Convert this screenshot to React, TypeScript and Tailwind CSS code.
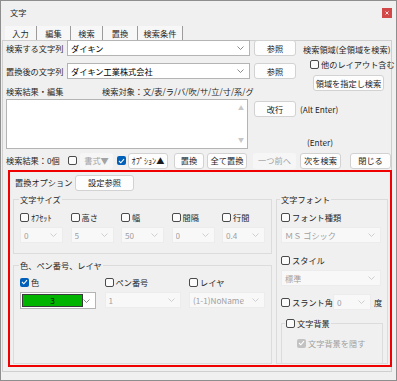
import React from 'react';

// 文字 dialog - 置換 tab with options panel open

const Chevron = ({ dim }: { dim?: boolean }) => (
    <svg width="7" height="4" viewBox="0 0 7 4" className="shrink-0">
        <polyline points="0.5,0.5 3.5,3.5 6.5,0.5" fill="none" stroke={dim ? '#c4c4c4' : '#707070'} strokeWidth="0.8" />
    </svg>
);

const Chk = ({ on, dim }: { on?: boolean; dim?: boolean }) =>
    on ? (
        <div className={`w-[9px] h-[9px] rounded-[2px] shrink-0 flex items-center justify-center ${dim ? 'bg-[#c2c2c2]' : 'bg-[#005fb8]'}`}>
            <svg width="7" height="6" viewBox="0 0 7 6">
                <polyline points="1,3 2.8,4.8 6,1.2" fill="none" stroke="#ffffff" strokeWidth="1.1" />
            </svg>
        </div>
    ) : (
        <div className="w-[9px] h-[9px] rounded-[2px] shrink-0 border border-[#4a4a4a] bg-[#fbfbfb]" />
    );

const Btn = ({ children, className = '', dim }: { children: React.ReactNode; className?: string; dim?: boolean }) => (
    <div
        className={`h-[16px] rounded-[3px] border flex items-center justify-center shrink-0 ${dim ? 'border-[#e4e4e4] bg-[#f6f6f6] text-[#a3a3a3]' : 'border-[#d2d2d2] bg-[#fdfdfd] text-[#1b1b1b]'} ${className}`}
    >
        {children}
    </div>
);

const Sel = ({ value, className = '', dim }: { value: string; className?: string; dim?: boolean }) => (
    <div
        className={`h-[16px] flex items-center justify-between pl-[3px] pr-[5px] shrink-0 border ${dim ? 'border-[#ececec] bg-[#f8f8f8] text-[#a0a0a0]' : 'border-[#b4b4b4] bg-white text-black'} ${className}`}
    >
        <span className="truncate">{value}</span>
        <Chevron dim={dim} />
    </div>
);

const ChkLabel = ({ label, on, dim }: { label: string; on?: boolean; dim?: boolean }) => (
    <div className={`h-[10px] flex items-center gap-[2px] ${dim ? 'text-[#a0a0a0]' : ''}`}>
        <Chk on={on} dim={dim} />
        <span>{label}</span>
    </div>
);

const tabs = [
    { name: '入力', w: 'w-[32px]' },
    { name: '編集', w: 'w-[34px]' },
    { name: '検索', w: 'w-[32px]' },
    { name: '置換', w: 'w-[35px]' },
    { name: '検索条件', w: 'w-[45px]' },
];

export default function App() {
    return (
        <div className="w-[397px] h-[381px] bg-[#f0f0f0] border border-[#8e8e8e] flex flex-col whitespace-nowrap font-['Noto_Sans_CJK_JP','Noto_Sans',sans-serif] text-[8.2px] leading-[11px] text-[#262626]">
            {/* Title bar */}
            <div className="h-[23px] flex items-center pl-[9px] pr-[4px] shrink-0">
                <span>文字</span>
                <div className="ml-auto w-[10px] h-[10px] bg-[#d24848] flex items-center justify-center">
                    <svg width="4" height="4" viewBox="0 0 4 4">
                        <path d="M0.5 0.5 L3.5 3.5 M3.5 0.5 L0.5 3.5" stroke="#fff" strokeWidth="0.8" />
                    </svg>
                </div>
            </div>

            {/* Tabs */}
            <div className="h-[16px] flex items-end pl-[4px] shrink-0">
                {tabs.map((t) => (
                    <div key={t.name} className={`${t.w} h-[14px] flex items-center justify-center border-r border-[#9c9c9c] bg-[#f7f7f7]`}>
                        {t.name}
                    </div>
                ))}
            </div>

            {/* Tab panel */}
            <div className="ml-[1px] w-[390px] h-[332px] border border-[#cfcfcf] pl-[3px] flex flex-col shrink-0">
                <div className="flex">
                    <div className="w-[291px] shrink-0 flex flex-col">
                        <div className="h-[16px] flex items-center -mt-[1px]">
                            <span className="w-[61px]">検索する文字列</span>
                            <Sel value="ダイキン" className="w-[183px]" />
                            <Btn className="ml-[4px] w-[42px]">参照</Btn>
                        </div>
                        <div className="h-[16px] flex items-center mt-[7px]">
                            <span className="w-[61px]">置換後の文字列</span>
                            <Sel value="ダイキン工業株式会社" className="w-[183px]" />
                            <Btn className="ml-[4px] w-[42px]">参照</Btn>
                        </div>
                        <div className="h-[11px] flex items-center mt-[7px]">
                            <span className="w-[96px]">検索結果・編集</span>
                            <span>検索対象：文/表/ラ/バ/吹/サ/立/寸/系/グ</span>
                        </div>
                    </div>
                    <div className="ml-[6px] flex flex-col pt-[3px]">
                        <span className="h-[11px]">検索領域(全領域を検索)</span>
                        <div className="ml-[7px] mt-[4px]">
                            <ChkLabel label="他のレイアウト含む" />
                        </div>
                        <Btn className="ml-[10px] mt-[6px] w-[71px] h-[16px]">領域を指定し検索</Btn>
                    </div>
                </div>

                <div className="flex mt-[2px]">
                    <div className="w-[242px] h-[50px] border border-[#b4b4b4] bg-white flex justify-end">
                        <div className="w-[12px] flex flex-col items-center justify-between py-[5px] text-[#c8c8c8] text-[6px] leading-[6px]">
                            <span>▲</span>
                            <span>▼</span>
                        </div>
                    </div>
                    <div className="flex flex-col ml-[6px]">
                        <div className="flex items-center mt-[2px]">
                            <Btn className="w-[42px]">改行</Btn>
                            <span className="ml-[4px]">(Alt Enter)</span>
                        </div>
                        <span className="ml-[53px] mt-[20px]">(Enter)</span>
                    </div>
                </div>

                <div className="h-[17px] flex items-center mt-[3px]">
                    <span className="w-[62px]">検索結果：0個</span>
                    <Chk />
                    <Btn dim className="ml-[3px] w-[33px] border-transparent bg-[#f6f6f6]">書式▼</Btn>
                    <div className="ml-[4px]"><Chk on /></div>
                    <Btn className="ml-[2px] w-[40px]">ｵﾌﾟｼｮﾝ▲</Btn>
                    <Btn className="ml-[6px] w-[30px]">置換</Btn>
                    <Btn className="ml-[3px] w-[40px]">全て置換</Btn>
                    <Btn dim className="ml-[6px] w-[43px] border-transparent">一つ前へ</Btn>
                    <Btn className="ml-[4px] w-[41px]">次を検索</Btn>
                    <Btn className="ml-[9px] w-[41px]">閉じる</Btn>
                </div>

                {/* Options panel */}
                <div className="ml-[2px] mt-[1px] w-[384px] h-[197px] border-2 border-[#f00000] flex flex-col">
                    <div className="h-[17px] flex items-center mt-[2px]">
                        <span className="pl-[5px] w-[65px]">置換オプション</span>
                        <Btn className="w-[59px]">設定参照</Btn>
                    </div>
                    <div className="flex gap-[6px] pl-[3px] mt-[3px]">
                        <div className="w-[257px] flex flex-col">
                            <fieldset className="h-[60px] border border-[#dcdcdc] px-[6px]">
                                <legend className="px-[1px] -ml-[1px]">文字サイズ</legend>
                                <div className="flex gap-[7.5px] mt-[7px]">
                                    {[
                                        ['ｵﾌｾｯﾄ', '0'],
                                        ['高さ', '5'],
                                        ['幅', '50'],
                                        ['間隔', '0'],
                                        ['行間', '0.4'],
                                    ].map(([l, v]) => (
                                        <div key={l} className="w-[43px] flex flex-col">
                                            <ChkLabel label={l} />
                                            <Sel dim value={v} className="mt-[5px] w-[43px]" />
                                        </div>
                                    ))}
                                </div>
                            </fieldset>
                            <fieldset className="h-[104px] mt-[6px] border border-[#dcdcdc] px-[6px]">
                                <legend className="px-[1px] -ml-[1px]">色、ペン番号、レイヤ</legend>
                                <div className="flex gap-[8.5px] mt-[6px]">
                                    <div className="w-[76px] flex flex-col">
                                        <ChkLabel label="色" on />
                                        <div className="mt-[5px] w-[76px] h-[17px] border border-[#b4b4b4] bg-white flex items-center pl-[1px] pr-[5px] justify-between">
                                            <div className="w-[62px] h-[13px] bg-[#00b400] border border-[#3a3a3a] flex items-center justify-center text-black">3</div>
                                            <Chevron />
                                        </div>
                                    </div>
                                    <div className="w-[76px] flex flex-col">
                                        <ChkLabel label="ペン番号" />
                                        <Sel dim value="1" className="mt-[5px] w-[76px]" />
                                    </div>
                                    <div className="w-[76px] flex flex-col">
                                        <ChkLabel label="レイヤ" />
                                        <Sel dim value="(1-1)NoName" className="mt-[5px] w-[76px]" />
                                    </div>
                                </div>
                            </fieldset>
                        </div>
                        <fieldset className="w-[110px] h-[170px] border border-[#dcdcdc] px-[4px]">
                            <legend className="px-[1px] -ml-[1px]">文字フォント</legend>
                            <div className="mt-[7px]"><ChkLabel label="フォント種類" /></div>
                            <Sel dim value="ＭＳ ゴシック" className="mt-[5px] w-[100px]" />
                            <div className="mt-[12px]"><ChkLabel label="スタイル" /></div>
                            <Sel dim value="標準" className="mt-[5px] w-[100px]" />
                            <div className="mt-[8px] h-[16px] flex items-center">
                                <div className="w-[52px]"><ChkLabel label="スラント角" /></div>
                                <Sel dim value="0" className="w-[38px]" />
                                <span className="ml-[3px]">度</span>
                            </div>
                            <fieldset className="mt-[8px] w-[102px] h-[46px] border border-[#dcdcdc] px-[4px]">
                                <legend className="px-[1px] -ml-[1px]">
                                    <ChkLabel label="文字背景" />
                                </legend>
                                <div className="ml-[11px] mt-[10px]">
                                    <ChkLabel label="文字背景を隠す" on dim />
                                </div>
                            </fieldset>
                        </fieldset>
                    </div>
                </div>
            </div>
        </div>
    );
}
